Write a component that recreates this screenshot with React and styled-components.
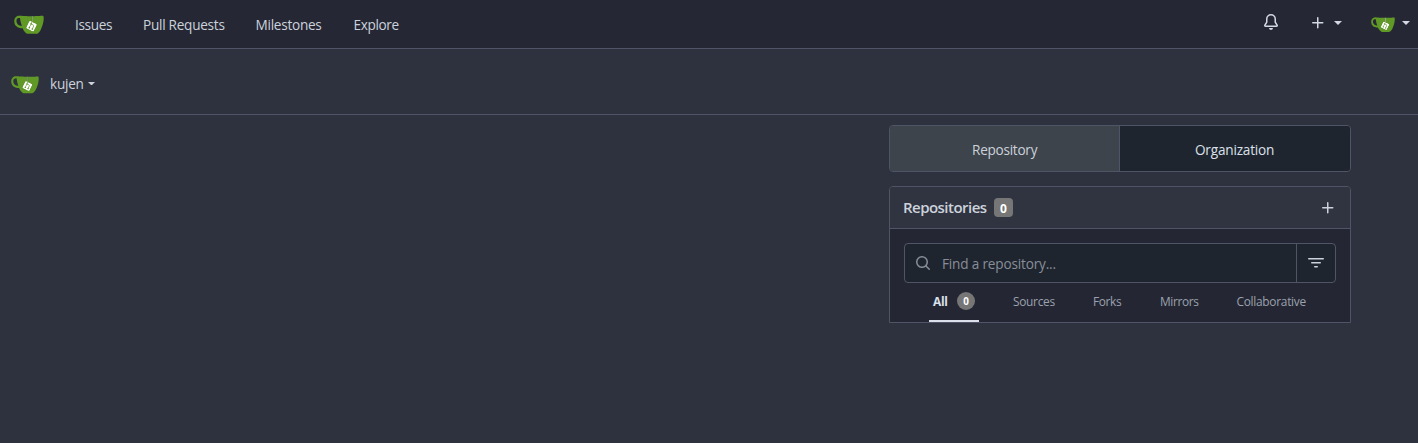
import React from "react";
import styled, { createGlobalStyle } from "styled-components";

const GlobalStyle = createGlobalStyle`
  * { box-sizing: border-box; }
  body {
    margin: 0;
    min-height: 443px;
    background: #2e323e;
    color: #ccd2dc;
    font: 13.6px/20px "Open Sans", "Noto Sans", sans-serif;
  }
  svg { display: block; flex: none; }
`;

const Label = styled.span`
  display: block;
  width: ${(p) => p.$w}px;
  white-space: nowrap;
  letter-spacing: ${(p) => p.$ls ?? -0.26}px;
`;

const NavBar = styled.nav`
  height: 49px;
  padding: 0 8px 0 14px;
  display: flex;
  align-items: center;
  background: #252834;
  border-bottom: 1px solid #505467;
`;

const NavLinks = styled.div`
  display: flex;
  gap: 31px;
  margin-left: 31px;
  padding-top: 1px;
`;

const NavLink = styled.a`
  color: #ccd2dc;
`;

const NavRight = styled.div`
  display: flex;
  align-items: center;
  margin-left: auto;
`;

const NavAction = styled.div`
  display: flex;
  align-items: center;
  gap: ${(p) => p.$gap || 0}px;
  margin-left: ${(p) => p.$ml || 0}px;
  padding-bottom: ${(p) => p.$pb || 0}px;
  color: #d3d8e4;
`;

const RaisedCaret = styled.span`
  padding-bottom: 2px;
`;

const ContextBar = styled.div`
  height: 66px;
  padding: 4px 0 0 11px;
  display: flex;
  align-items: center;
  border-bottom: 1px solid #505467;
`;

const ContextName = styled.div`
  display: flex;
  align-items: center;
  gap: 3px;
  margin-left: 11px;
`;

const Main = styled.main`
  display: flex;
  justify-content: flex-end;
  padding: 10px 67px 0 0;
`;

const Sidebar = styled.aside`
  width: 462px;
`;

const Switcher = styled.div`
  display: flex;
  height: 47px;
  border: 1px solid #505467;
  border-radius: 4px;
  overflow: hidden;
`;

const SwitchItem = styled.a`
  flex: ${(p) => (p.$active ? "0 0 230px" : "1")};
  display: flex;
  align-items: center;
  justify-content: center;
  padding-top: 2px;
  background: ${(p) => (p.$active ? "#3d444b" : "#1f252f")};
  color: ${(p) => (p.$active ? "#ccd2dc" : "#dbe0ea")};
  border-right: ${(p) => (p.$active ? "1px solid #505467" : "0")};
`;

const Box = styled.section`
  margin-top: 14px;
  border: 1px solid #505467;
  border-radius: 4px 4px 0 0;
  background: #242733;
`;

const BoxHeader = styled.header`
  height: 42px;
  padding: 0 14px 0 13px;
  display: flex;
  align-items: center;
  background: #303440;
  border-bottom: 1px solid #505467;
  border-radius: 3px 3px 0 0;
  svg { margin-left: auto; }
`;

const BoxTitle = styled.h4`
  margin: 0;
  padding-bottom: 2px;
  font-size: 15px;
  font-weight: 600;
`;

const CountLabel = styled.span`
  width: 19px;
  height: 19px;
  margin-left: 7px;
  border-radius: 4px;
  background: #767676;
  color: #fff;
  font-size: 12px;
  font-weight: 700;
  line-height: 21px;
  text-align: center;
`;

const SearchRow = styled.div`
  display: flex;
  height: 40px;
  margin: 14px 14px 0;
  border: 1px solid #505467;
  border-radius: 4px;
  background: #1f252f;
`;

const SearchField = styled.div`
  flex: 1;
  display: flex;
  align-items: center;
  gap: 11px;
  padding: 2px 0 0 10px;
  color: #888e99;
  svg { margin-bottom: 3px; }
`;

const FilterButton = styled.div`
  width: 39px;
  display: flex;
  justify-content: center;
  padding-top: 11px;
  border-left: 1px solid #505467;
  color: #ccd2dc;
`;

const Tabs = styled.div`
  display: flex;
  justify-content: flex-start;
  height: 39px;
  padding-left: 39px;
`;

const Tab = styled.a`
  display: flex;
  align-items: flex-start;
  height: 39px;
  padding: 9px 4px 0;
  margin-right: ${(p) => p.$mr || 0}px;
  color: ${(p) => (p.$active ? "#dbe0ea" : "#9ba1ae")};
  font-size: 11.9px;
  line-height: 18px;
  font-weight: ${(p) => (p.$active ? 700 : 400)};
  border-bottom: 2px solid ${(p) => (p.$active ? "#dbe0ea" : "transparent")};
`;

const TabCount = styled.span`
  width: 18px;
  height: 18px;
  border-radius: 50%;
  background: #767676;
  color: #fff;
  font-size: 9.8px;
  line-height: 19px;
  text-align: center;
`;

const ICONS = {
  bell: "M8 16a2 2 0 0 0 1.985-1.75c.017-.137-.097-.25-.235-.25h-3.5c-.138 0-.252.113-.235.25A2 2 0 0 0 8 16ZM3 5a5 5 0 0 1 10 0v2.947c0 .05.015.098.042.139l1.703 2.555A1.519 1.519 0 0 1 13.482 13H2.518a1.516 1.516 0 0 1-1.263-2.36l1.703-2.554A.255.255 0 0 0 3 7.947Zm5-3.5A3.5 3.5 0 0 0 4.5 5v2.947c0 .346-.102.683-.294.97l-1.703 2.556a.017.017 0 0 0-.003.01l.001.006c0 .002.002.004.004.006l.006.004.007.001h10.964l.007-.001.006-.004.004-.006.001-.007a.017.017 0 0 0-.003-.01l-1.703-2.554a1.745 1.745 0 0 1-.294-.97V5A3.5 3.5 0 0 0 8 1.5Z",
  plus: "M7.75 2a.75.75 0 0 1 .75.75V7h4.25a.75.75 0 0 1 0 1.5H8.5v4.25a.75.75 0 0 1-1.5 0V8.5H2.75a.75.75 0 0 1 0-1.5H7V2.75A.75.75 0 0 1 7.75 2Z",
  search: "M10.68 11.74a6 6 0 0 1-7.922-8.982 6 6 0 0 1 8.982 7.922l3.04 3.04a.749.749 0 0 1-.326 1.275.749.749 0 0 1-.734-.215ZM11.5 7a4.499 4.499 0 1 0-8.997 0A4.499 4.499 0 0 0 11.5 7Z",
  filter: "M.75 3h14.5a.75.75 0 0 1 0 1.5H.75a.75.75 0 0 1 0-1.5ZM3 7.75A.75.75 0 0 1 3.75 7h8.5a.75.75 0 0 1 0 1.5h-8.5A.75.75 0 0 1 3 7.75Zm3 4a.75.75 0 0 1 .75-.75h2.5a.75.75 0 0 1 0 1.5h-2.5a.75.75 0 0 1-.75-.75Z",
};

const Icon = ({ name }) => (
  <svg width="16" height="16" viewBox="0 0 16 16" fill="currentColor"><path d={ICONS[name]} /></svg>
);

const Caret = ({ size = 8 }) => (
  <svg width={size} height={size / 2} viewBox="0 0 8 4" fill="currentColor"><path d="M0 0h8L4 4z" /></svg>
);

const Logo = ({ size }) => (
  <svg width={size} height={size} viewBox="0 0 640 640">
    <path fill="#fff" d="M395.9,484.2l-126.9-61c-12.5-6-17.9-21.2-11.8-33.8l61-126.9c6-12.5,21.2-17.9,33.8-11.8c17.2,8.3,27.1,13,27.1,13l-0.1-109.2l16.7-0.1l0.1,117.1c0,0,57.4,24.2,83.1,40.1c3.7,2.3,10.2,6.8,12.9,14.4c2.1,6.1,2,13.1-1,19.3l-61,126.9C423.6,484.9,408.4,490.3,395.9,484.2z" />
    <g fill="#609926">
      <path d="M622.7,149.8c-4.1-4.1-9.6-4-9.6-4s-117.2,6.6-177.9,8c-13.3,0.3-26.5,0.6-39.6,0.7c0,39.1,0,78.2,0,117.2c-5.5-2.6-11.1-5.3-16.6-7.9c0-36.4-0.1-109.2-0.1-109.2c-29,0.4-89.2-2.2-89.2-2.2s-141.4-7.1-156.8-8.5c-9.8-0.6-22.5-2.1-39,1.5c-8.7,1.8-33.5,7.4-53.8,26.9C-4.9,212.4,6.6,276.2,8,285.8c1.7,11.7,6.9,44.2,31.7,72.5c45.8,56.1,144.4,54.8,144.4,54.8s12.1,28.9,30.6,55.5c25,33.1,50.7,58.9,75.7,62c63,0,188.9-0.1,188.9-0.1s12,0.1,28.3-10.3c14-8.5,26.5-23.4,26.5-23.4s12.9-13.8,30.9-45.3c5.5-9.7,10.1-19.1,14.1-28c0,0,55.2-117.1,55.2-231.1C633.2,157.9,624.7,151.8,622.7,149.8z M125.6,353.9c-25.9-8.5-36.9-18.7-36.9-18.7S69.6,321.8,60,295.4c-16.5-44.2-1.4-71.2-1.4-71.2s8.4-22.5,38.5-30c13.8-3.7,31-3.1,31-3.1s7.1,59.4,15.7,94.2c7.2,29.2,24.8,77.7,24.8,77.7S142.5,359.9,125.6,353.9z M425.9,461.5c0,0-6.1,14.5-19.6,15.4c-5.8,0.4-10.3-1.2-10.3-1.2s-0.3-0.1-5.3-2.1l-112.9-55c0,0-10.9-5.7-12.8-15.6c-2.2-8.1,2.7-18.1,2.7-18.1L322,273c0,0,4.8-9.7,12.2-13c0.6-0.3,2.3-1,4.5-1.5c8.1-2.1,18,2.8,18,2.8l110.7,53.7c0,0,12.6,5.7,15.3,16.2c1.9,7.4-0.5,14-1.8,17.2C474.6,363.8,425.9,461.5,425.9,461.5z" />
      <path d="M326.8,380.1c-8.2,0.1-15.4,5.8-17.3,13.8c-1.9,8,2,16.3,9.1,20c7.7,4,17.5,1.8,22.7-5.4c5.1-7.1,4.3-16.9-1.8-23.1l24-49.1c1.5,0.1,3.7,0.2,6.2-0.5c4.1-0.9,7.1-3.6,7.1-3.6c4.2,1.8,8.6,3.8,13.2,6.1c4.8,2.4,9.3,4.9,13.4,7.3c0.9,0.5,1.8,1.1,2.8,1.9c1.6,1.3,3.4,3.1,4.7,5.5c1.9,5.5-1.9,14.9-1.9,14.9c-2.3,7.6-18.4,40.6-18.4,40.6c-8.1-0.2-15.3,5-17.7,12.5c-2.6,8.1,1.1,17.3,8.9,21.3c7.8,4,17.4,1.7,22.5-5.3c5-6.8,4.6-16.3-1.1-22.6c1.9-3.7,3.7-7.4,5.6-11.3c5-10.4,13.5-30.4,13.5-30.4c0.9-1.7,5.7-10.3,2.7-21.3c-2.5-11.4-12.6-16.7-12.6-16.7c-12.2-7.9-29.2-15.2-29.2-15.2s0-4.1-1.1-7.1c-1.1-3.1-2.8-5.1-3.9-6.3c4.7-9.7,9.4-19.3,14.1-29c-4.1-2-8.1-4-12.2-6.1c-4.8,9.8-9.7,19.7-14.5,29.5c-6.7-0.1-12.9,3.5-16.1,9.4c-3.4,6.3-2.7,14.1,1.9,19.8C343.2,346.5,335,363.3,326.8,380.1z" />
    </g>
  </svg>
);

export default function App() {
  return (
    <>
      <GlobalStyle />
      <NavBar>
        <Logo size={30} />
        <NavLinks>
          <NavLink><Label $w={37} $ls={-0.35}>Issues</Label></NavLink>
          <NavLink><Label $w={81.5}>Pull Requests</Label></NavLink>
          <NavLink><Label $w={67}>Milestones</Label></NavLink>
          <NavLink><Label $w={46} $ls={-0.35}>Explore</Label></NavLink>
        </NavLinks>
        <NavRight>
          <NavAction $pb={4}><Icon name="bell" /></NavAction>
          <NavAction $ml={31} $gap={8} $pb={3}><Icon name="plus" /><Caret /></NavAction>
          <NavAction $ml={29} $gap={7}><Logo size={24} /><RaisedCaret><Caret /></RaisedCaret></NavAction>
        </NavRight>
      </NavBar>
      <ContextBar>
        <Logo size={28} />
        <ContextName><Label $w={35}>kujen</Label><Caret size={7} /></ContextName>
      </ContextBar>
      <Main>
        <Sidebar>
          <Switcher>
            <SwitchItem $active><Label $w={65}>Repository</Label></SwitchItem>
            <SwitchItem><Label $w={80} $ls={-0.2}>Organization</Label></SwitchItem>
          </Switcher>
          <Box>
            <BoxHeader>
              <BoxTitle><Label $w={84} $ls={-0.53}>Repositories</Label></BoxTitle>
              <CountLabel>0</CountLabel>
              <Icon name="plus" />
            </BoxHeader>
            <SearchRow>
              <SearchField><Icon name="search" /><Label $w={114} $ls={-0.18}>Find a repository...</Label></SearchField>
              <FilterButton><Icon name="filter" /></FilterButton>
            </SearchRow>
            <Tabs>
              <Tab $active $mr={30}><Label $w={24}>All</Label><TabCount>0</TabCount></Tab>
              <Tab $mr={30}><Label $w={42} $ls={-0.3}>Sources</Label></Tab>
              <Tab $mr={30}><Label $w={29} $ls={-0.35}>Forks</Label></Tab>
              <Tab $mr={30}><Label $w={38.5} $ls={-0.38}>Mirrors</Label></Tab>
              <Tab><Label $w={71} $ls={-0.28}>Collaborative</Label></Tab>
            </Tabs>
          </Box>
        </Sidebar>
      </Main>
    </>
  );
}
